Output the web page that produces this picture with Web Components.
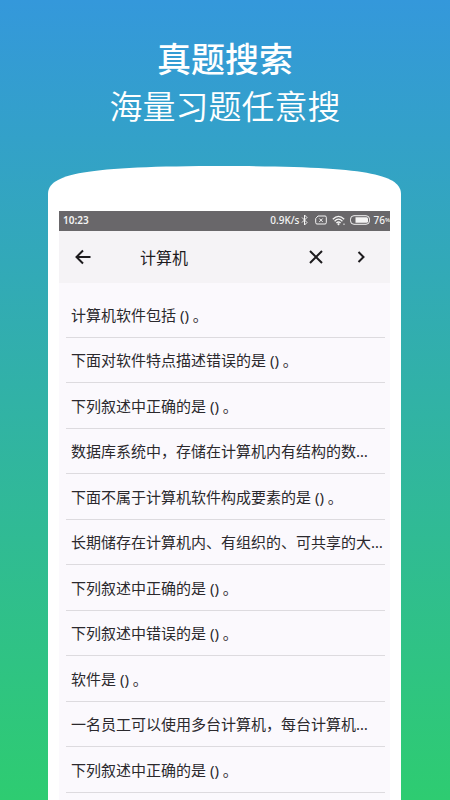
<!DOCTYPE html>
<html lang="zh-CN">
<head>
<meta charset="utf-8">
<meta name="viewport" content="width=device-width, initial-scale=1">
<title>真题搜索</title>
<style>
  html { height: 100%; }
  body {
    margin: 0;
    height: 100%;
    overflow: hidden;
    font-family: "Noto Sans", "Noto Sans CJK SC", sans-serif;
  }
</style>
</head>
<body>
<promo-page>
  <promo-title slot="title">
    真题搜索
    <span slot="subtitle">海量习题任意搜</span>
  </promo-title>
  <phone-frame>
    <status-bar time="10:23" speed="0.9K/s" battery="76"></status-bar>
    <search-bar value="计算机"></search-bar>
    <question-list>
      <question-row>计算机软件包括 () 。</question-row>
      <question-row>下面对软件特点描述错误的是 () 。</question-row>
      <question-row>下列叙述中正确的是 () 。</question-row>
      <question-row>数据库系统中，存储在计算机内有结构的数…</question-row>
      <question-row>下面不属于计算机软件构成要素的是 () 。</question-row>
      <question-row>长期储存在计算机内、有组织的、可共享的大…</question-row>
      <question-row>下列叙述中正确的是 () 。</question-row>
      <question-row>下列叙述中错误的是 () 。</question-row>
      <question-row>软件是 () 。</question-row>
      <question-row>一名员工可以使用多台计算机，每台计算机…</question-row>
      <question-row>下列叙述中正确的是 () 。</question-row>
      <question-row></question-row>
    </question-list>
  </phone-frame>
</promo-page>

<script>
function attachTemplate(element, html) {
  const template = document.createElement("template")
  template.innerHTML = html
  const shadow = element.attachShadow({mode: "open"})
  shadow.appendChild(template.content.cloneNode(true))
  return shadow
}

class PromoPage extends HTMLElement {
  constructor() {
    super()
    attachTemplate(this, `
      <style>
        :host {
          display: flex;
          flex-direction: column;
          min-height: 100%;
          background: linear-gradient(#3498db, #2ecc71) 0 0 / 100% 100vh;
        }
        main {
          flex: 1;
          display: flex;
          flex-direction: column;
          margin: 0 49px 0 48px;
        }
      </style>
      <slot name="title"></slot>
      <main><slot></slot></main>
    `)
  }
}

class PromoTitle extends HTMLElement {
  constructor() {
    super()
    attachTemplate(this, `
      <style>
        :host {
          display: block;
          padding: 35px 0;
          color: #fff;
          text-align: center;
        }
        h1, p {
          margin: 0;
          line-height: 48px;
          white-space: nowrap;
        }
        h1 { font-size: 34px; font-weight: 500; }
        p { font-size: 33px; font-weight: 350; }
      </style>
      <h1><slot></slot></h1>
      <p><slot name="subtitle"></slot></p>
    `)
  }
}

class PhoneFrame extends HTMLElement {
  constructor() {
    super()
    attachTemplate(this, `
      <style>
        :host {
          flex: 1;
          display: flex;
          flex-direction: column;
        }
        svg {
          display: block;
          width: 100%;
          height: 45px;
        }
        .body {
          flex: 1;
          padding: 0 11px;
          background: #fff;
        }
      </style>
      <svg viewBox="0 0 352 45" preserveAspectRatio="none" aria-hidden="true">
        <path d="M0 45V28C0 8 36 0 176 0S352 8 352 28V45Z" fill="#fff"/>
      </svg>
      <div class="body"><slot></slot></div>
    `)
  }
}

class StatusBar extends HTMLElement {
  constructor() {
    super()
    const shadow = attachTemplate(this, `
      <style>
        :host {
          display: flex;
          align-items: center;
          box-sizing: border-box;
          height: 20px;
          padding: 0 0 2px 4px;
          overflow: hidden;
          background: #69676a;
          color: #f4f4f4;
          font-size: 10px;
          font-weight: 500;
          line-height: 16px;
        }
        .time { flex: 1; font-weight: 600; }
        .icons { display: flex; align-items: center; }
        svg {
          display: block;
          fill: none;
          stroke: currentColor;
        }
        .bluetooth { margin: 0 7px 0 2px; }
        .wifi { margin: 0 4px 0 5px; }
        .level { margin-left: 3px; }
        .percent { font-size: 6px; }
      </style>
      <span class="time"></span>
      <div class="icons">
        <span class="speed"></span>
        <svg class="bluetooth" width="7" height="12" viewBox="0 0 7 12"><path d="M1 3.5l5 5L3.5 11V1L6 3.5l-5 5"/></svg>
        <svg width="12" height="10" viewBox="0 0 12 10"><path d="M3 1h7q1.3 0 1.3 1.3v5.4Q11.300 9 10 9H2Q.7 9 .7 7.700V3.500ZM4.300 3.500l3.400 3.400M7.700 3.500L4.300 6.900"/></svg>
        <svg class="wifi" width="14" height="11" viewBox="0 0 14 11"><path d="M.8 4.200Q6.500-1.400 12.200 4.200M2.600 6.200Q6.500 2.200 10.400 6.200M4.400 8Q6.500 6 8.600 8" stroke-width="1.300"/><path d="M6.500 8l1.400 1-1.400 1.400L5.100 9ZM11.500 8.500h1v1.500h-1Z" fill="currentColor" stroke="none"/></svg>
        <svg width="20" height="10" viewBox="0 0 20 10"><rect x=".5" y=".7" width="19" height="8.600" rx="3.500"/><path d="M5.500 2.200H16.500Q18 2.200 18 3.700V6.300Q18 7.800 16.500 7.800H5.500Z" fill="currentColor" stroke="none"/></svg>
        <span class="level"></span>
        <span class="percent">%</span>
      </div>
    `)
    shadow.querySelector(".time").textContent = this.getAttribute("time")
    shadow.querySelector(".speed").textContent = this.getAttribute("speed")
    shadow.querySelector(".level").textContent = this.getAttribute("battery")
  }
}

class SearchBar extends HTMLElement {
  constructor() {
    super()
    const shadow = attachTemplate(this, `
      <style>
        :host {
          display: flex;
          align-items: center;
          height: 52px;
          padding: 0 17px 0 12px;
          background: #f5f3f6;
          color: #1d1b1e;
        }
        button {
          display: grid;
          place-items: center;
          width: 24px;
          height: 24px;
          padding: 0;
          border: 0;
          background: none;
          color: inherit;
          cursor: pointer;
        }
        svg {
          fill: none;
          stroke: currentColor;
          stroke-width: 2;
        }
        input {
          flex: 1;
          min-width: 0;
          height: 24px;
          margin-left: 45px;
          padding: 0;
          border: 0;
          outline: 0;
          background: none;
          color: inherit;
          font: inherit;
          font-size: 16px;
        }
        .next { margin-left: 21px; }
      </style>
      <button class="back" aria-label="返回"><svg width="18" height="18" viewBox="0 0 18 18"><path d="M16.500 9H2.500M9 2.500L2.500 9l6.500 6.500"/></svg></button>
      <input type="text" aria-label="搜索">
      <button class="clear" aria-label="清除"><svg width="14" height="14" viewBox="0 0 14 14"><path d="M1 1l12 12M13 1L1 13"/></svg></button>
      <button class="next" aria-label="搜索"><svg width="8" height="12" viewBox="0 0 8 12"><path d="M1.500 1l5 5-5 5"/></svg></button>
    `)
    const input = shadow.querySelector("input")
    input.value = this.getAttribute("value")
    shadow.querySelector(".clear").onclick = () => {
      input.value = ""
      input.focus()
    }
  }
}

class QuestionList extends HTMLElement {
  constructor() {
    super()
    attachTemplate(this, `
      <style>
        :host {
          display: block;
          padding: 9px 5px 0 7px;
          background: #fbf9fd;
        }
        ::slotted(question-row) { height: 45px; }
        ::slotted(question-row:nth-child(odd)) { height: 46px; }
      </style>
      <slot></slot>
    `)
  }
}

class QuestionRow extends HTMLElement {
  constructor() {
    super()
    attachTemplate(this, `
      <style>
        :host {
          display: flex;
          align-items: center;
          box-sizing: border-box;
          padding-left: 5px;
          border-bottom: 1px solid #dddbdf;
          color: #2b292d;
          font-size: 15px;
          line-height: 24px;
        }
        span { white-space: nowrap; }
      </style>
      <span><slot></slot></span>
    `)
  }
}

customElements.define("promo-page", PromoPage)
customElements.define("promo-title", PromoTitle)
customElements.define("phone-frame", PhoneFrame)
customElements.define("status-bar", StatusBar)
customElements.define("search-bar", SearchBar)
customElements.define("question-list", QuestionList)
customElements.define("question-row", QuestionRow)
</script>
</body>
</html>
